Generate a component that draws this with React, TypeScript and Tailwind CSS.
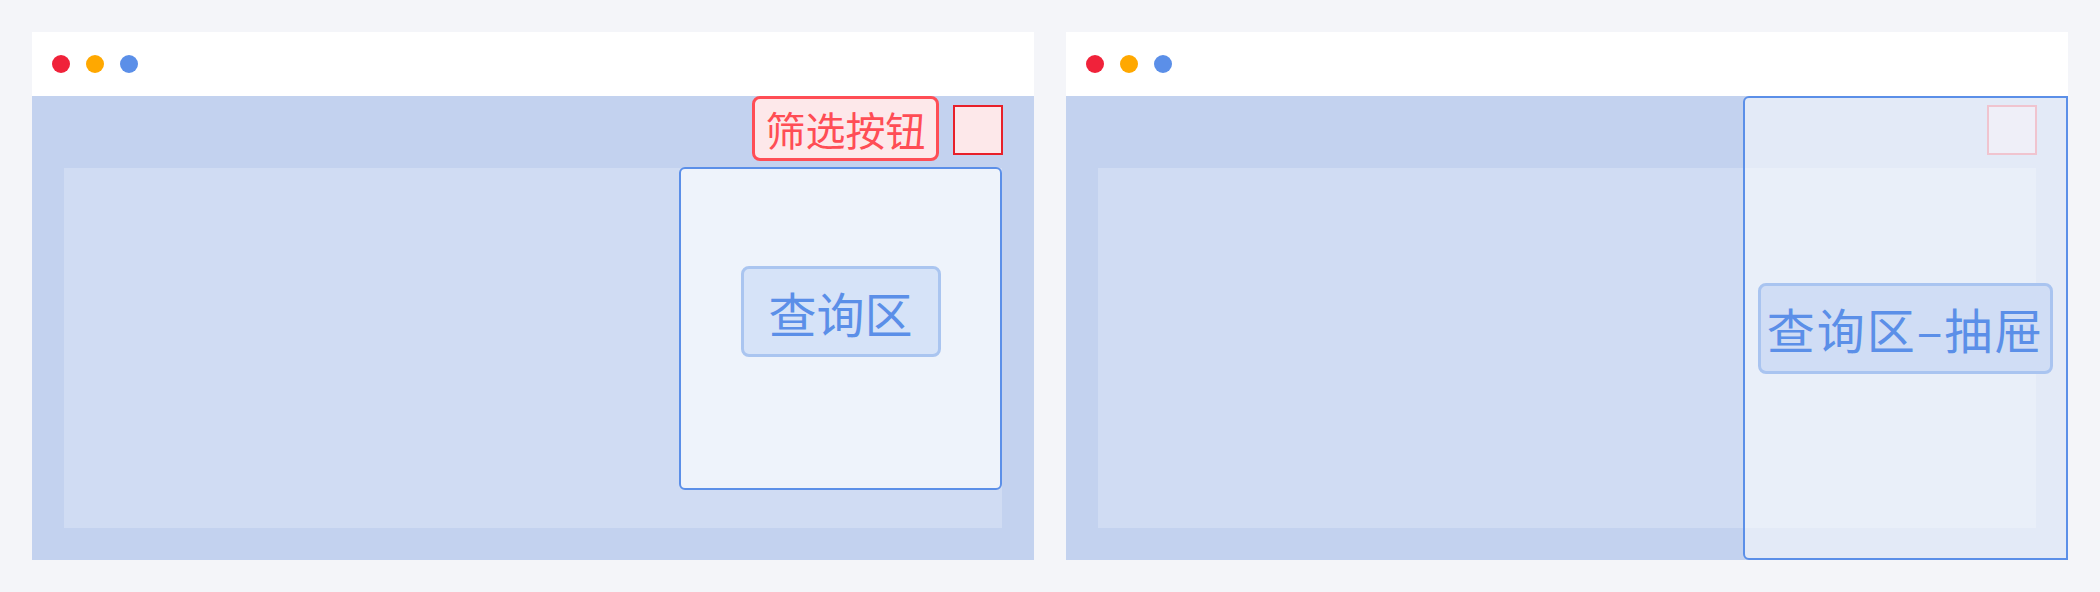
import React from "react";

const font = { fontFamily: '"Noto Sans CJK SC", "Noto Sans", sans-serif' };

function TitleBar() {
  return (
    <div className="h-16 bg-white flex items-center gap-4 pl-5">
      <span className="w-[18px] h-[18px] rounded-full bg-[#f0223a]" />
      <span className="w-[18px] h-[18px] rounded-full bg-[#ffa800]" />
      <span className="w-[18px] h-[18px] rounded-full bg-[#5b8fe8]" />
    </div>
  );
}

function QueryCard() {
  return (
    <div className="w-[323px] h-[323px] -mt-px bg-[#eef3fb] border-2 border-[#5b8fe8] rounded-md flex justify-center pt-[97px]">
      <div className="w-[200px] h-[91px] bg-[#d6e3f8] border-[3px] border-[#aac5f0] rounded-lg flex items-center justify-center text-[48px] leading-none text-[#5b8fe8]">
        查询区
      </div>
    </div>
  );
}

function PanelWindow() {
  return (
    <div className="w-[1002px] flex flex-col">
      <TitleBar />
      <div className="h-[464px] bg-[#c3d2ef] flex flex-col px-8 pb-8">
        <div className="h-[72px] flex justify-end items-start gap-[14px] -mr-px">
          <button className="w-[187px] h-[65px] bg-[#fde8ea] border-[3px] border-[#ff4d55] rounded-lg flex items-center justify-center text-[40px] leading-none text-[#ff4d55]">
            筛选按钮
          </button>
          <div className="mt-[9px] w-[50px] h-[50px] bg-[#fde8ea] border-2 border-[#e8202a]" />
        </div>
        <div className="flex-1 bg-[#d0dcf3] flex justify-end items-start">
          <QueryCard />
        </div>
      </div>
    </div>
  );
}

function DrawerWindow() {
  return (
    <div className="w-[1002px] flex flex-col">
      <TitleBar />
      <div className="relative h-[464px] bg-[#c3d2ef] flex flex-col px-8 pb-8">
        <div className="h-[72px] flex justify-end items-start -mr-px">
          <div className="mt-[9px] w-[50px] h-[50px] bg-[#ddddf0] border-2 border-[#df8299]" />
        </div>
        <div className="flex-1 bg-[#d0dcf3]" />
        <div className="absolute right-0 top-0 bottom-0 w-[325px] bg-white/[0.53] border-2 border-[#5b8fe8] rounded-l-md flex items-center justify-center">
          <div className="w-[295px] h-[91px] bg-[#d0ddf5] border-[3px] border-[#a9c4f0] rounded-lg flex items-center justify-center text-[48px] leading-none tracking-[2px] text-[#5b8fe8] whitespace-nowrap">
            查询区–抽屉
          </div>
        </div>
      </div>
    </div>
  );
}

export default function App() {
  return (
    <div className="w-[2100px] h-[592px] bg-[#f4f5f9] flex gap-8 p-8" style={font}>
      <PanelWindow />
      <DrawerWindow />
    </div>
  );
}
